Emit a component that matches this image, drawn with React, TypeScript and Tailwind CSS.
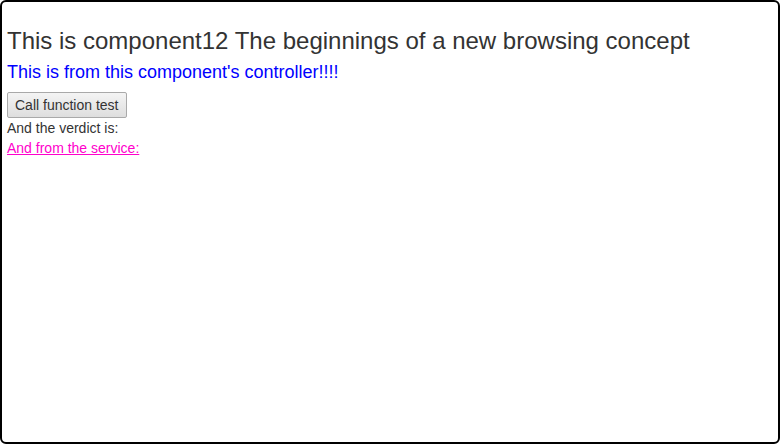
export default function App() {
  return (
    <div className="h-[444px] w-[780px] overflow-hidden rounded-[6px] border-2 border-black bg-white font-['Liberation_Sans',Arial,sans-serif] text-sm leading-5 text-[#333]">
      <div className="px-[5px] pt-[24px]">
        <h1 className="text-[24px] leading-[30px]">This is component12 The beginnings of a new browsing concept</h1>
        <p className="mt-[5px] text-[18px] leading-[22px] text-[#0000ff]">This is from this component&apos;s controller!!!!</p>
        <button className="mt-[9px] h-[26px] rounded-[2px] border border-[#a9a9a9] bg-gradient-to-b from-[#f4f4f4] to-[#dedede] px-[7px] text-sm leading-5 text-[#333]">
          Call function test
        </button>
        <div className="leading-5">And the verdict is:</div>
        <a href="#" className="block leading-5 text-[#ff00cc] underline">
          And from the service:
        </a>
      </div>
    </div>
  );
}
